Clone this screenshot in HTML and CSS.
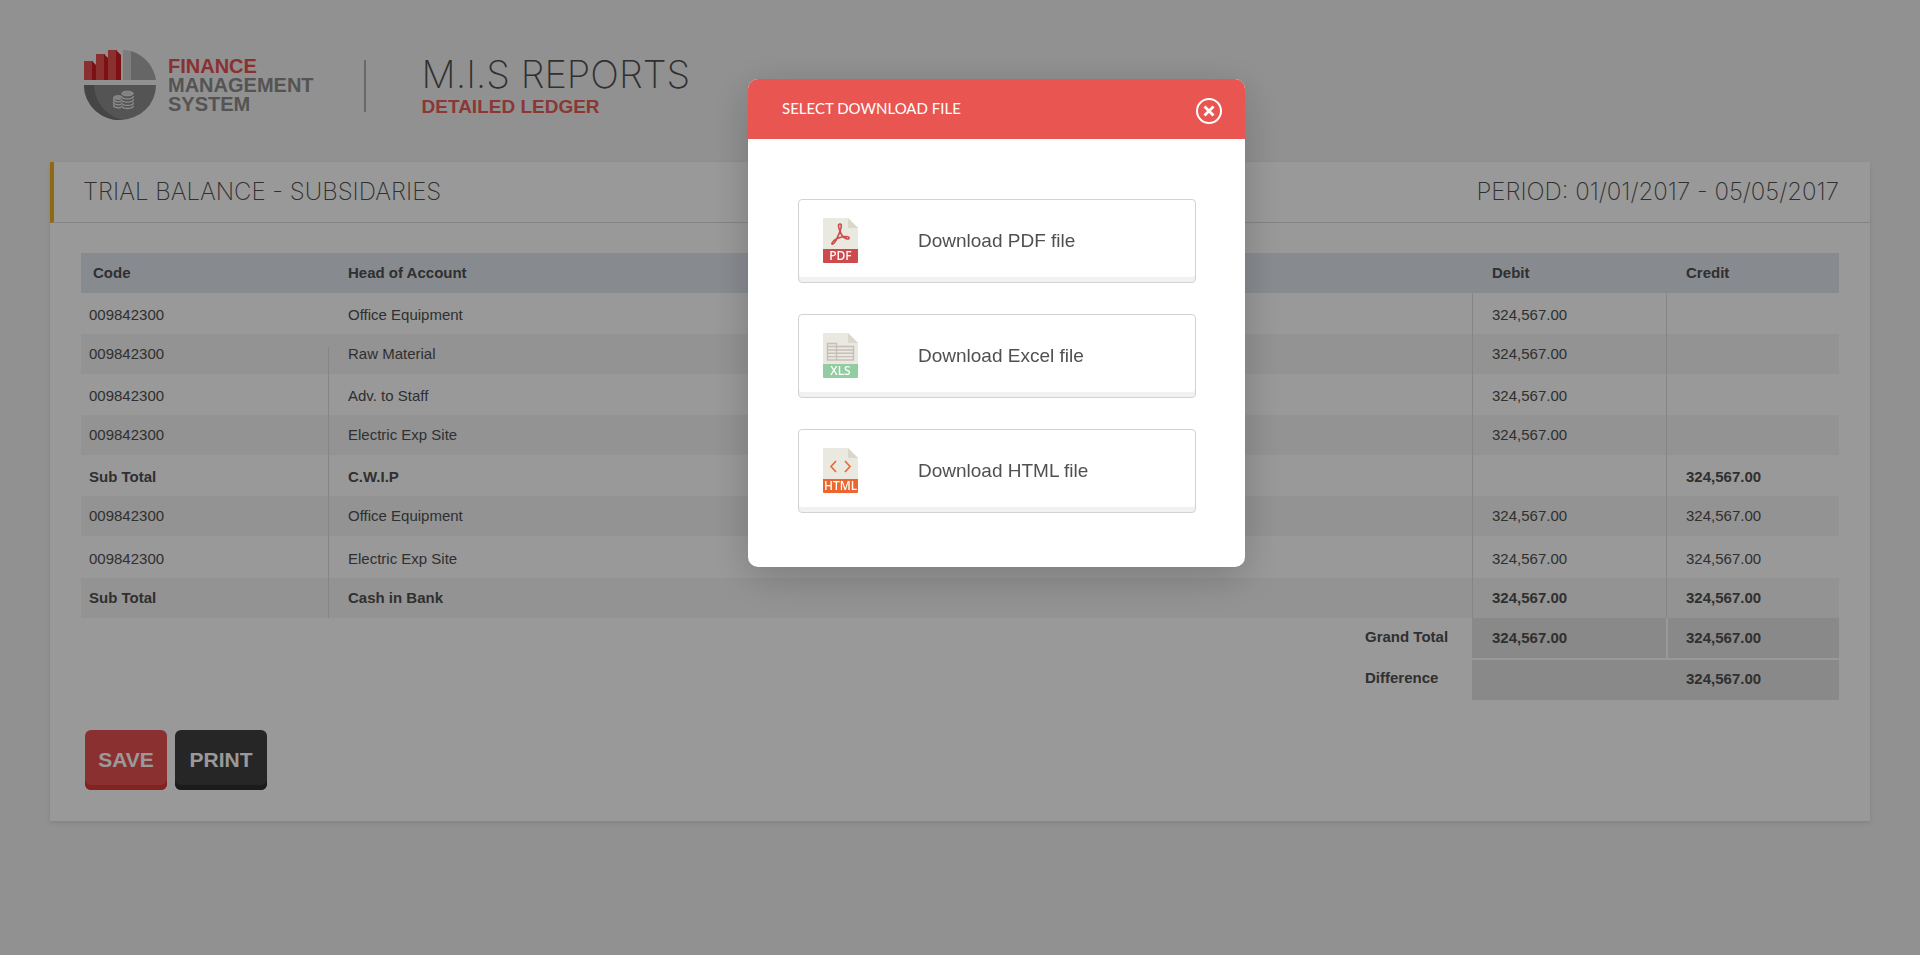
FILE: index.html
```html
<!DOCTYPE html>
<html lang="en">
<head>
<meta charset="utf-8">
<title>M.I.S Reports - Detailed Ledger</title>
<meta name="viewport" content="width=device-width, initial-scale=1">
<link rel="stylesheet" href="styles.css">
</head>
<body>
<header class="masthead">
  <div class="brand">
    <svg class="brand-mark" viewBox="0 0 72 70" aria-hidden="true">
      <path fill="#e85050" d="M0 11h9v19H0zM12 4h9v26h-9zM24 0h9v30h-9z"/>
      <path fill="#d01c20" d="M8 11l4 4v15H8zM20 4l4 4v22h-4zM32 0l5 5v25h-5z"/>
      <path fill="#cfcfcf" d="M39 0c3 0 6 .5 8 1v29h-8z"/>
      <path fill="#aaa" d="M47 1c13 4 23 15 25 29H47z"/>
      <path fill="#8c8c8c" d="M0 35h72a36 35 0 0 1-72 0z"/>
      <path fill="#747474" d="M0 35h10c1 18 13 32 30 35A36 35 0 0 1 0 35z"/>
      <g fill="none" stroke="#eee" stroke-width="1.300" stroke-linecap="round">
        <path d="M29.500 49c0 3 6 3.500 8 2M29.500 52c0 3 6 3.500 8 2M29.500 55c0 3 6 3.500 8 2"/>
        <ellipse cx="34" cy="47.500" rx="4.500" ry="1.800" fill="#d8d8d8" stroke-width="1"/>
        <path fill="#8c8c8c" stroke="none" d="M37 43h13v15H37z"/>
        <path d="M37.700 46.500c0 3.200 11.600 3.200 11.600 0M37.700 49.700c0 3.200 11.600 3.200 11.600 0M37.700 52.900c0 3.200 11.600 3.200 11.600 0M37.700 56.100c0 3.200 11.600 3.200 11.600 0"/>
        <ellipse cx="43.500" cy="43.500" rx="5.800" ry="2.300" fill="#d8d8d8" stroke-width="1"/>
      </g>
    </svg>
    <p class="brand-name"><span class="accent">FINANCE</span><br>MANAGEMENT<br>SYSTEM</p>
  </div>
  <div class="report-name">
    <h1>M.I.S REPORTS</h1>
    <p>DETAILED LEDGER</p>
  </div>
</header>

<main class="panel">
  <div class="panel-head">
    <h2>TRIAL BALANCE - SUBSIDARIES</h2>
    <p>PERIOD: 01/01/2017 - 05/05/2017</p>
  </div>
  <div class="panel-body">
    <table class="ledger">
      <colgroup><col class="col-code"><col><col class="col-label"><col class="col-debit"><col class="col-credit"></colgroup>
      <thead>
        <tr><th scope="col">Code</th><th scope="col" colspan="2">Head of Account</th><th scope="col">Debit</th><th scope="col">Credit</th></tr>
      </thead>
      <tbody>
        <tr><td>009842300</td><td class="head" colspan="2">Office Equipment</td><td class="sum">324,567.00</td><td class="sum"></td></tr>
        <tr><td>009842300</td><td class="head" colspan="2">Raw Material</td><td class="sum">324,567.00</td><td class="sum"></td></tr>
        <tr><td>009842300</td><td class="head" colspan="2">Adv. to Staff</td><td class="sum">324,567.00</td><td class="sum"></td></tr>
        <tr><td>009842300</td><td class="head" colspan="2">Electric Exp Site</td><td class="sum">324,567.00</td><td class="sum"></td></tr>
        <tr class="subtotal"><td>Sub Total</td><td class="head" colspan="2">C.W.I.P</td><td class="sum"></td><td class="sum">324,567.00</td></tr>
        <tr><td>009842300</td><td class="head" colspan="2">Office Equipment</td><td class="sum">324,567.00</td><td class="sum">324,567.00</td></tr>
        <tr class="last-entry"><td>009842300</td><td class="head" colspan="2">Electric Exp Site</td><td class="sum">324,567.00</td><td class="sum">324,567.00</td></tr>
        <tr class="subtotal"><td>Sub Total</td><td class="head" colspan="2">Cash in Bank</td><td class="sum">324,567.00</td><td class="sum">324,567.00</td></tr>
      </tbody>
      <tfoot>
        <tr><td colspan="2"></td><th scope="row">Grand Total</th><td class="total">324,567.00</td><td class="total total-split">324,567.00</td></tr>
        <tr class="difference"><td colspan="2"></td><th scope="row">Difference</th><td class="total"></td><td class="total">324,567.00</td></tr>
      </tfoot>
    </table>
    <div class="actions">
      <button class="btn btn-save" type="button">SAVE</button>
      <button class="btn btn-print" type="button">PRINT</button>
    </div>
  </div>
</main>

<div class="overlay">
  <section class="modal" role="dialog" aria-modal="true" aria-labelledby="modal-title">
    <div class="modal-head">
      <h2 id="modal-title">SELECT DOWNLOAD FILE</h2>
      <button class="close" type="button" aria-label="Close">
        <svg viewBox="0 0 26 26" fill="none" stroke="#fff" aria-hidden="true">
          <circle cx="13" cy="13" r="12" stroke-width="2"/>
          <path d="M8.500 8.500l9 9M17.500 8.500l-9 9" stroke-width="2.800"/>
        </svg>
      </button>
    </div>
    <div class="modal-body">
      <button class="option" type="button">
        <svg class="file-icon" viewBox="0 0 35 45" aria-hidden="true">
          <path fill="#e9e9e0" d="M1 0h24l10 10v21H0V1q0-1 1-1z"/>
          <path fill="#d9d7ca" d="M25 0l10 10H25z"/>
          <path fill="#cc4b4c" d="M0 31h35v13q0 1-1 1H1q-1 0-1-1z"/>
          <path fill="none" stroke="#cc4b4c" stroke-width="1.600" d="M17 13c-2-4-2-7 0-7s1.500 3 0 7c-1 4-3 7-5 11-1 2-4 3-3 1 2-4 9-6 14-6.500 4 0 4 3 1 2.500-3-1-6-4-7-8z"/>
          <text class="tag" x="17.500" y="42" fill="#fff">PDF</text>
        </svg>
        <span>Download PDF file</span>
      </button>
      <button class="option" type="button">
        <svg class="file-icon" viewBox="0 0 35 45" aria-hidden="true">
          <path fill="#e9e9e0" d="M1 0h24l10 10v21H0V1q0-1 1-1z"/>
          <path fill="#d9d7ca" d="M25 0l10 10H25z"/>
          <path fill="#91cda0" d="M0 31h35v13q0 1-1 1H1q-1 0-1-1z"/>
          <path fill="none" stroke="#c8bdb8" stroke-width="1.400" d="M4.500 10.500h9v16.500h-9zM13.500 13.500h17v13.500h-17zM4.500 13.500h9M4.500 17h26M4.500 20.300h26M4.500 23.600h26"/>
          <text class="tag" x="17.500" y="42" fill="#fff">XLS</text>
        </svg>
        <span>Download Excel file</span>
      </button>
      <button class="option" type="button">
        <svg class="file-icon" viewBox="0 0 35 45" aria-hidden="true">
          <path fill="#e9e9e0" d="M1 0h24l10 10v21H0V1q0-1 1-1z"/>
          <path fill="#d9d7ca" d="M25 0l10 10H25z"/>
          <path fill="#ec6630" d="M0 31h35v13q0 1-1 1H1q-1 0-1-1z"/>
          <path fill="none" stroke="#ec6630" stroke-width="1.600" d="M13 13l-5 5.500 5 5.500M22 13l5 5.500-5 5.500"/>
          <text class="tag" x="17.500" y="42" fill="#fff">HTML</text>
        </svg>
        <span>Download HTML file</span>
      </button>
    </div>
  </section>
</div>
</body>
</html>
```
FILE: styles.css
```css
* {
  box-sizing: border-box;
}

body {
  margin: 0;
  min-height: 100vh;
  background: #f2f2f2;
  color: #505050;
  font-family: "Liberation Sans", Arial, sans-serif;
  font-size: 15px;
}

h1,
h2,
p {
  margin: 0;
}

button {
  font-family: inherit;
  cursor: pointer;
}

/* Masthead */
.masthead {
  display: flex;
  align-items: center;
  height: 162px;
  padding: 0 84px;
}

.brand {
  display: flex;
  align-items: center;
  gap: 12px;
  height: 72px;
  margin-top: 8px;
}

.brand-mark {
  width: 72px;
  height: 70px;
}

.brand-name {
  color: #8c8c8c;
  font-size: 20px;
  font-weight: 700;
  line-height: 19px;
}

.accent {
  color: #e85050;
}

.report-name {
  height: 52px;
  margin: 10px 0 0 50px;
  padding-left: 56px;
  border-left: 2px solid #b0b0b0;
}

.report-name h1 {
  font-family: Inter, "Liberation Sans", sans-serif;
  font-size: 38px;
  font-weight: 200;
  line-height: 28px;
}

.report-name p {
  margin-top: 8px;
  color: #e85c58;
  font-size: 19px;
  font-weight: 700;
  line-height: 22px;
}

/* Report panel */
.panel {
  margin: 0 50px 40px;
  background: #fff;
  box-shadow: 0 2px 5px rgba(0, 0, 0, 0.1);
}

.panel-head {
  display: flex;
  justify-content: space-between;
  align-items: center;
  height: 61px;
  padding: 0 31px 1px 29px;
  border-bottom: 1px solid #dcdcdc;
  border-left: 4px solid #f0b020;
  font-family: Inter, "Liberation Sans", sans-serif;
}

.panel-head h2,
.panel-head p {
  font-size: 24px;
  font-weight: 200;
}

.panel-body {
  padding: 30px 31px 31px;
}

/* Ledger table */
.ledger {
  width: 100%;
  border-spacing: 0;
  table-layout: fixed;
  line-height: 18px;
}

.col-code {
  width: 247px;
}

.col-label {
  width: 123px;
}

.col-debit {
  width: 194px;
}

.col-credit {
  width: 173px;
}

.ledger th,
.ledger td {
  height: 40px;
  padding: 0 20px 1px;
  text-align: left;
}

.ledger thead th {
  background: #e2e7ef;
}

.ledger thead th:first-child {
  padding-left: 12px;
}

.ledger tbody td:first-child {
  padding-left: 8px;
}

.ledger tbody tr:nth-child(odd) td {
  height: 41px;
  padding-top: 3px;
}

.ledger tbody tr.last-entry td {
  height: 42px;
  padding-top: 5px;
}

.ledger tbody tr:nth-child(even) {
  background: #f5f5f5;
}

.ledger .head,
.ledger .sum {
  background: linear-gradient(#dedede, #dedede) no-repeat left bottom / 1px 100%;
}

.ledger tr:nth-child(1) .head {
  background: none;
}

.ledger tr:nth-child(2) .head {
  background-size: 1px 27px;
}

.subtotal,
.ledger tfoot {
  font-weight: 700;
}

.ledger tfoot th {
  padding: 0 0 2px 16px;
}

.ledger .total {
  background: #e4e4e4;
}

.ledger .total-split {
  padding-left: 18px;
  border-left: 2px solid #fff;
}

.ledger .difference .total {
  height: 42px;
  padding-bottom: 3px;
  border-top: 2px solid #fff;
}

/* Action buttons */
.actions {
  display: flex;
  gap: 8px;
  margin-top: 30px;
  padding-left: 4px;
}

.btn {
  height: 60px;
  padding: 0 12px;
  border: 0;
  border-radius: 6px;
  color: #fff;
  font-size: 21px;
  font-weight: 700;
}

.btn-save {
  min-width: 82px;
  background: #e85050;
  box-shadow: inset 0 -5px #dc3838;
}

.btn-print {
  min-width: 92px;
  background: #404040;
  box-shadow: inset 0 -5px #2e2e2e;
}

/* Download dialog */
.overlay {
  position: fixed;
  inset: 0;
  display: flex;
  justify-content: center;
  align-items: flex-start;
  padding: 79px 0 0 73px;
  background: rgba(0, 0, 0, 0.4);
}

.modal {
  width: 497px;
  border-radius: 10px;
  background: #fff;
  box-shadow: 0 10px 40px rgba(0, 0, 0, 0.2);
  overflow: hidden;
}

.modal-head {
  display: flex;
  justify-content: space-between;
  align-items: center;
  height: 60px;
  padding: 0 23px 0 34px;
  background: #e95550;
  color: #fff;
}

.modal-head h2 {
  padding-bottom: 2px;
  font-family: Lato, "Liberation Sans", sans-serif;
  font-size: 15px;
  font-weight: 400;
}

.close {
  width: 26px;
  height: 26px;
  margin-top: 4px;
  padding: 0;
  border: 0;
  background: none;
}

.close svg {
  display: block;
}

.modal-body {
  display: flex;
  flex-direction: column;
  gap: 31px;
  padding: 60px 49px 54px 50px;
}

.option {
  display: flex;
  align-items: center;
  gap: 60px;
  height: 84px;
  padding: 0 24px 2px;
  border: 1px solid #d2d2d2;
  border-radius: 4px;
  background: #fff;
  box-shadow: inset 0 -5px #f1f1f1;
  color: #505050;
  font-size: 19px;
  line-height: 23px;
}

.file-icon {
  width: 35px;
  height: 45px;
}

.tag {
  font-family: "Noto Sans", sans-serif;
  font-size: 12px;
  font-weight: 500;
  text-anchor: middle;
}
```
